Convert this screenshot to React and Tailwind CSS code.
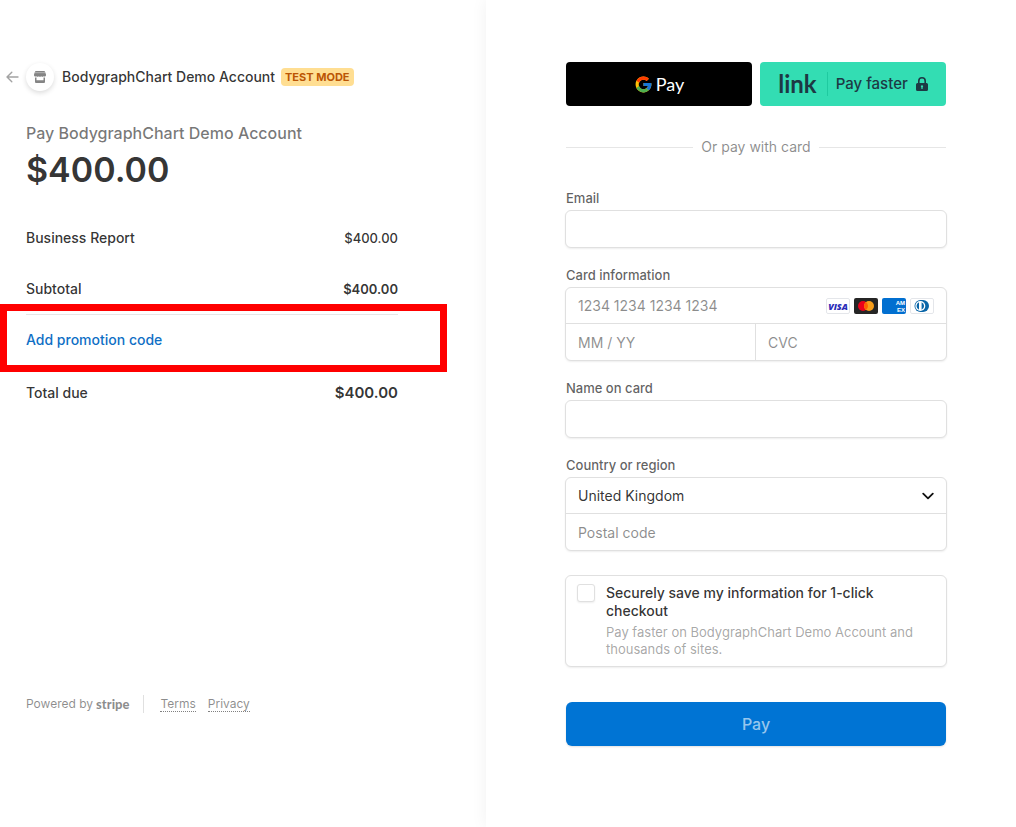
import { FcGoogle } from "react-icons/fc";

const ACCOUNT_NAME = "BodygraphChart Demo Account";

const FIELD_BOX =
  "-mx-px border border-[#e0e0e0] rounded-md bg-white shadow-[0_1px_2px_rgba(0,0,0,0.07)]";
const FIELD_INPUT =
  "block w-full min-w-0 bg-transparent px-3 text-sm text-[#1a1a1a]/90 placeholder:text-[#1a1a1a]/50 outline-none";
const FIELD_LABEL = "block mb-0.5 text-[13px] leading-5 font-medium text-[#1a1a1a]/70";

const BackArrow = () => (
  <svg width="13" height="12" viewBox="0 0 13 12" fill="none" stroke="#a3a3a3" strokeWidth="1.4" strokeLinecap="round" strokeLinejoin="round">
    <path d="M12 6H1.2M5.8 1.2 1 6l4.8 4.8" />
  </svg>
);

const StoreIcon = () => (
  <svg width="12" height="12" viewBox="0 0 12 12" fill="#858585">
    <path d="M1.8 0h8.4a.8.8 0 0 1 .7.5L12 3.400v.8a1.500 1.500 0 0 1-2.400 1.100 1.800 1.800 0 0 1-2.400 0 1.800 1.800 0 0 1-2.400 0 1.800 1.800 0 0 1-2.400 0A1.500 1.500 0 0 1 0 4.200v-.8L1.100.5A.8.8 0 0 1 1.800 0z" />
    <path d="M1 6.600h1.500v2.600h7V6.600H11V11a1 1 0 0 1-1 1H2a1 1 0 0 1-1-1z" />
    <path d="M1 1.700h10" stroke="#fff" strokeWidth=".4" />
  </svg>
);

const LockIcon = () => (
  <svg width="12" height="14" viewBox="0 0 12 14" fill="#1d3944">
    <path fillRule="evenodd" d="M2 6V4a4 4 0 0 1 8 0v2h.5A1.500 1.500 0 0 1 12 7.500v5a1.500 1.500 0 0 1-1.500 1.500h-9A1.500 1.500 0 0 1 0 12.500v-5A1.500 1.500 0 0 1 1.500 6zm1.600 0h4.800V4a2.400 2.400 0 0 0-4.800 0zM6 8.200a1.200 1.200 0 0 0-.6 2.200V12h1.200v-1.600A1.200 1.200 0 0 0 6 8.200z" />
  </svg>
);

const ChevronIcon = () => (
  <svg width="12" height="8" viewBox="0 0 12 8" fill="none" stroke="#111" strokeWidth="1.800" strokeLinecap="round" strokeLinejoin="round">
    <path d="M1.200 1.600 6 6.400l4.800-4.800" />
  </svg>
);

const CardBrands = () => (
  <div className="flex gap-1 shrink-0">
    <svg width="24" height="16" viewBox="0 0 24 16" role="img" aria-label="Visa">
      <rect x=".5" y=".5" width="23" height="15" rx="1.500" fill="#fff" stroke="#e4e6ea" />
      <text x="12" y="11.500" textAnchor="middle" fontFamily="Open Sans, sans-serif" fontSize="9" fontWeight="800" fontStyle="italic" fill="#2a2bb8">VISA</text>
    </svg>
    <svg width="24" height="16" viewBox="0 0 24 16" role="img" aria-label="Mastercard">
      <rect width="24" height="16" rx="2" fill="#252525" />
      <circle cx="9" cy="8" r="5" fill="#eb001b" />
      <circle cx="15" cy="8" r="5" fill="#f79e1b" />
      <path d="M12 4a5 5 0 0 1 0 8 5 5 0 0 1 0-8z" fill="#ff5f00" />
    </svg>
    <svg width="24" height="16" viewBox="0 0 24 16" role="img" aria-label="American Express">
      <rect width="24" height="16" rx="2" fill="#016fd0" />
      <g fontFamily="Liberation Sans, sans-serif" fontSize="6" fontWeight="700" fill="#fff">
        <text x="23" y="7" textAnchor="end">AM</text>
        <text x="23" y="14" textAnchor="end">EX</text>
      </g>
    </svg>
    <svg width="24" height="16" viewBox="0 0 24 16" role="img" aria-label="Diners Club">
      <rect x=".5" y=".5" width="23" height="15" rx="1.500" fill="#fff" stroke="#e4e6ea" />
      <path d="M10.500 2H13a6 6 0 0 1 0 12h-2.500z" fill="#0a66a8" />
      <circle cx="10.500" cy="8" r="6" fill="#0a66a8" />
      <circle cx="10.300" cy="8" r="5" fill="#fff" />
      <path d="M9 4.300a4 4 0 0 0 0 7.400zM11.600 4.300a4 4 0 0 1 0 7.400z" fill="#0a66a8" />
    </svg>
  </div>
);

const OrderSummary = () => (
  <section className="flex flex-col pt-[62px] pb-10">
    <header className="flex items-center pl-1.5 h-[30px]">
      <a href="#back" aria-label="Back" className="w-5">
        <BackArrow />
      </a>
      <span className="flex items-center justify-center size-7 rounded-full bg-white shadow-[0_2px_5px_rgba(0,0,0,0.14)]">
        <StoreIcon />
      </span>
      <h1 className="ml-2 text-sm font-medium text-[#1a1a1a]/90 whitespace-nowrap">{ACCOUNT_NAME}</h1>
      <span className="ml-1.5 px-1 rounded bg-[#ffde92] text-[11px] leading-[18px] font-bold text-[#bb5504] whitespace-nowrap">
        TEST MODE
      </span>
    </header>

    <div className="flex flex-col grow ml-[26px] mr-12 max-w-[372px]">
      <p className="mt-[29px] text-base font-medium text-[#1a1a1a]/60">{`Pay ${ACCOUNT_NAME}`}</p>
      <p className="mt-[5px] text-[34px] leading-10 font-semibold text-[#1a1a1a]/90">$400.00</p>

      <div className="mt-[38px] flex justify-between text-sm leading-5 font-medium text-[#1a1a1a]/90">
        <span>Business Report</span>
        <span className="text-[13px] leading-5">$400.00</span>
      </div>
      <div className="mt-[31px] flex justify-between text-sm leading-5 font-medium text-[#1a1a1a]/90">
        <span>Subtotal</span>
        <span className="text-[13px] leading-5 font-semibold">$400.00</span>
      </div>

      <div className="relative mt-[15px] pt-[15px] pb-[31px] border-t border-[#e6e6e6] flex">
        <button type="button" className="text-sm leading-5 font-medium text-[#0f6fc5]">
          Add promotion code
        </button>
        <div className="absolute -top-[11px] -left-[26px] -right-[49px] h-[68px] border-[7px] border-[#ff0000] pointer-events-none" />
      </div>

      <div className="flex items-center justify-between text-sm leading-5 font-medium text-[#1a1a1a]/90">
        <span>Total due</span>
        <span className="text-[15px] leading-6 font-semibold">$400.00</span>
      </div>

      <footer className="mt-[289px] flex items-center text-xs leading-5 text-[#1a1a1a]/50">
        <span>Powered by</span>
        <span className="ml-[3px] font-[Lato,sans-serif] text-[13px] leading-5 font-black">stripe</span>
        <span className="ml-3.5 mr-4 h-[18px] w-px bg-[#e0e0e0]" />
        <a href="#terms" className="leading-[14px] border-b border-dotted border-[#808080]">Terms</a>
        <a href="#privacy" className="ml-3 leading-[14px] border-b border-dotted border-[#808080]">Privacy</a>
      </footer>
    </div>
  </section>
);

const ExpressButtons = () => (
  <div className="grid grid-cols-2 gap-2">
    <button type="button" className="flex items-center justify-center gap-[3px] h-11 rounded bg-black text-white">
      <FcGoogle size={19} />
      <span className="font-[Lato,sans-serif] text-lg leading-5">Pay</span>
    </button>
    <button type="button" className="flex items-center justify-center h-11 rounded bg-[#33ddb3] text-[#1d3944]">
      <span className="font-[Lato,sans-serif] text-2xl leading-6 font-bold">link</span>
      <span className="ml-2.5 mr-2 h-6 w-px bg-[#1fcaa0]" />
      <span className="text-[15px] leading-6 font-medium mr-2">Pay faster</span>
      <LockIcon />
    </button>
  </div>
);

const PaymentForm = () => (
  <form className="w-full max-w-[380px]" onSubmit={(e) => e.preventDefault()}>
    <ExpressButtons />

    <div className="mt-[31px] flex items-center gap-2 text-sm text-[#1a1a1a]/50">
      <span className="h-px grow bg-[#e6e6e6]" />
      <span>Or pay with card</span>
      <span className="h-px grow bg-[#e6e6e6]" />
    </div>

    <div className="mt-[31px]">
      <label htmlFor="email" className={FIELD_LABEL}>Email</label>
      <div className={FIELD_BOX}>
        <input id="email" type="email" className={`${FIELD_INPUT} h-9`} />
      </div>
    </div>

    <div className="mt-[17px]">
      <label htmlFor="cardNumber" className={FIELD_LABEL}>Card information</label>
      <div className={FIELD_BOX}>
        <div className="flex items-center pr-3 border-b border-[#e0e0e0]">
          <input id="cardNumber" placeholder="1234 1234 1234 1234" className={`${FIELD_INPUT} h-[35px]`} />
          <CardBrands />
        </div>
        <div className="grid grid-cols-2 divide-x divide-[#e0e0e0]">
          <input aria-label="Expiration" placeholder="MM / YY" className={`${FIELD_INPUT} h-9`} />
          <input aria-label="CVC" placeholder="CVC" className={`${FIELD_INPUT} h-9`} />
        </div>
      </div>
    </div>

    <div className="mt-[17px]">
      <label htmlFor="cardName" className={FIELD_LABEL}>Name on card</label>
      <div className={FIELD_BOX}>
        <input id="cardName" className={`${FIELD_INPUT} h-9`} />
      </div>
    </div>

    <div className="mt-[17px]">
      <label htmlFor="country" className={FIELD_LABEL}>Country or region</label>
      <div className={FIELD_BOX}>
        <div className="relative border-b border-[#e0e0e0]">
          <select id="country" className={`${FIELD_INPUT} h-[35px] appearance-none`}>
            <option>United Kingdom</option>
          </select>
          <span className="absolute right-3 inset-y-0 flex items-center pointer-events-none">
            <ChevronIcon />
          </span>
        </div>
        <input aria-label="Postal code" placeholder="Postal code" className={`${FIELD_INPUT} h-9`} />
      </div>
    </div>

    <div className={`${FIELD_BOX} mt-6 flex gap-[11px] px-[11px] py-2`}>
      <input
        id="saveInfo"
        type="checkbox"
        className="appearance-none shrink-0 size-[18px] rounded-[3px] border border-[#e0e0e0] bg-white shadow-[0_1px_2px_rgba(0,0,0,0.07)]"
      />
      <div>
        <label htmlFor="saveInfo" className="block text-sm leading-[18px] font-medium text-[#1a1a1a]/90">
          Securely save my information for 1-click checkout
        </label>
        <p className="mt-1 text-[13px] leading-[17px] text-[#1a1a1a]/40">
          {`Pay faster on ${ACCOUNT_NAME} and thousands of sites.`}
        </p>
      </div>
    </div>

    <button
      type="submit"
      className="mt-[35px] block w-full h-11 rounded-md bg-[#0074d4] text-base font-medium text-white/60 shadow-[0_1px_2px_rgba(0,0,0,0.12)]"
    >
      Pay
    </button>
  </form>
);

const App = () => (
  <div className="min-h-screen grid grid-cols-[486fr_530fr] overflow-hidden bg-white font-[Inter,sans-serif]">
    <OrderSummary />
    <main className="relative bg-white pt-[62px] pb-10 pl-20 pr-[70px] shadow-[0_0_16px_rgba(0,0,0,0.06)]">
      <PaymentForm />
    </main>
  </div>
);

export default App;
